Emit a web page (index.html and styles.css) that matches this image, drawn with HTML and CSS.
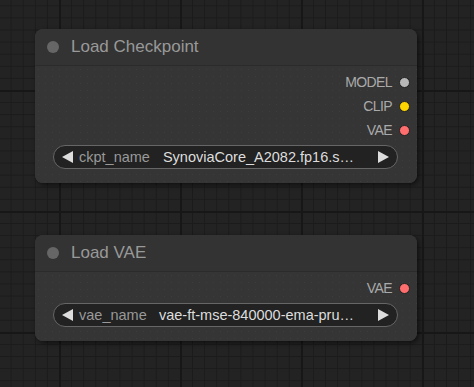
FILE: index.html
```html
<!DOCTYPE html>
<html lang="en">
<head>
    <meta charset="UTF-8">
    <meta name="viewport" content="width=device-width, initial-scale=1.0">
    <title>Nodes</title>
    <link rel="stylesheet" href="styles.css">
</head>
<body>
    <div class="canvas">
        <div class="node">
            <div class="node-title">
                <span class="title-dot"></span>
                <span class="title-text">Load Checkpoint</span>
            </div>
            <div class="node-body">
                <div class="output">
                    <span class="output-label">MODEL</span>
                    <span class="slot slot-model"></span>
                </div>
                <div class="output">
                    <span class="output-label">CLIP</span>
                    <span class="slot slot-clip"></span>
                </div>
                <div class="output">
                    <span class="output-label">VAE</span>
                    <span class="slot slot-vae"></span>
                </div>
                <div class="combo">
                    <svg class="arrow" width="12" height="14" viewBox="0 0 12 14"><polygon points="11,1 11,13 0,7" fill="#ddd"/></svg>
                    <span class="combo-label">ckpt_name</span>
                    <span class="combo-value">SynoviaCore_A2082.fp16.s…</span>
                    <svg class="arrow" width="12" height="14" viewBox="0 0 12 14"><polygon points="1,1 1,13 12,7" fill="#ddd"/></svg>
                </div>
            </div>
        </div>

        <div class="node">
            <div class="node-title">
                <span class="title-dot"></span>
                <span class="title-text">Load VAE</span>
            </div>
            <div class="node-body">
                <div class="output">
                    <span class="output-label">VAE</span>
                    <span class="slot slot-vae"></span>
                </div>
                <div class="combo">
                    <svg class="arrow" width="12" height="14" viewBox="0 0 12 14"><polygon points="11,1 11,13 0,7" fill="#ddd"/></svg>
                    <span class="combo-label">vae_name</span>
                    <span class="combo-value">vae-ft-mse-840000-ema-pru…</span>
                    <svg class="arrow" width="12" height="14" viewBox="0 0 12 14"><polygon points="1,1 1,13 12,7" fill="#ddd"/></svg>
                </div>
            </div>
        </div>
    </div>
</body>
</html>
```

FILE: styles.css
```css
html, body {
    height: 100%;
}
body {
    margin: 0;
    overflow: hidden;
    font-family: "Liberation Sans", Arial, sans-serif;
    background-color: #232323;
    background-image:
        linear-gradient(to right, #171717 2px, transparent 2px),
        linear-gradient(to bottom, #171717 2px, transparent 2px),
        linear-gradient(to right, #1b1b1b 1px, transparent 1px),
        linear-gradient(to bottom, #1b1b1b 1px, transparent 1px);
    background-size: 121px 121px, 121px 121px, 12.1px 12.1px, 12.1px 12.1px;
    background-position: 59px 90px;
}
.canvas {
    display: flex;
    flex-direction: column;
    gap: 52px;
    padding: 29px 0 0 35px;
}
.node {
    width: 382px;
    background: #353535;
    border-radius: 8px;
    box-shadow: 2px 2px 5px rgba(0, 0, 0, 0.55);
    overflow: hidden;
}
.node-title {
    display: flex;
    align-items: center;
    height: 36px;
    padding-left: 12px;
    background: #333;
    border-bottom: 1px solid #2b2b2b;
}
.title-dot {
    width: 12px;
    height: 12px;
    border-radius: 50%;
    background: #666;
    margin-right: 12px;
}
.title-text {
    font-size: 17px;
    color: #999;
}
.node-body {
    padding: 4px 0 14px;
    background-color: #353535;
    background-image: radial-gradient(circle, #3d3d3d 0.7px, transparent 0.8px);
    background-size: 7px 7px;
}
.output {
    display: flex;
    justify-content: flex-end;
    align-items: center;
    height: 24px;
    padding-right: 7px;
}
.output-label {
    font-size: 14px;
    color: #aaa;
    letter-spacing: -0.6px;
    margin-right: 7px;
}
.slot {
    width: 9px;
    height: 9px;
    border-radius: 50%;
    border: 1px solid #222;
}
.slot-model { background: #b8b8b8; }
.slot-clip { background: #ffd500; }
.slot-vae { background: #ff6e6e; }
.combo {
    display: flex;
    align-items: center;
    height: 22px;
    margin: 3px 19px 0 18px;
    padding: 0 8px;
    background: #222;
    border: 1px solid #666;
    border-radius: 12px;
    font-size: 14.5px;
}
.arrow {
    flex: none;
}
.combo-label {
    margin-left: 5px;
    color: #999;
    white-space: nowrap;
}
.combo-value {
    flex: 1;
    text-align: right;
    color: #ddd;
    white-space: nowrap;
    overflow: hidden;
    padding-right: 23px;
}
```
